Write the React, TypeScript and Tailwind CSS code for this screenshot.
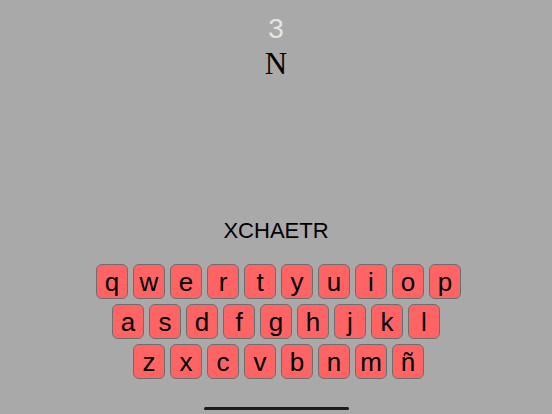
import React from 'react';

const rows = [
  { keys: ['q', 'w', 'e', 'r', 't', 'y', 'u', 'i', 'o', 'p'], shift: 'ml-[5px]' },
  { keys: ['a', 's', 'd', 'f', 'g', 'h', 'j', 'k', 'l'], shift: 'ml-0' },
  { keys: ['z', 'x', 'c', 'v', 'b', 'n', 'm', 'ñ'], shift: 'ml-[5px]' },
];

function Key({ label }: { label: string }) {
  return (
    <button className="w-[32px] h-[35px] flex items-center justify-center rounded-[6px] border border-[#6e6e6e] bg-[#ff6464] text-[26px] leading-none text-black">
      {label}
    </button>
  );
}

export default function App() {
  return (
    <div className="w-[552px] h-[414px] bg-[#a9a9a9] flex flex-col items-center font-['Liberation_Sans',Arial,sans-serif] overflow-hidden">
      <div className="mt-[12px] h-[34px] text-[28px] leading-[34px] text-[#e4e4e4]">3</div>
      <div className="h-[36px] text-[31px] leading-[36px] text-black font-['Liberation_Serif','Times_New_Roman',serif]">N</div>
      <div className="mt-[136px] h-[26px] text-[22px] leading-[26px] text-black">XCHAETR</div>
      <div className="mt-[20px] flex flex-col gap-[5px]">
        {rows.map((row, i) => (
          <div key={i} className={`flex justify-center gap-[5px] ${row.shift}`}>
            {row.keys.map((k) => (
              <Key key={k} label={k} />
            ))}
          </div>
        ))}
      </div>
      <div className="mt-auto mb-[4px] w-[145px] h-[3px] rounded-full bg-[#1c1c1c]" />
    </div>
  );
}
